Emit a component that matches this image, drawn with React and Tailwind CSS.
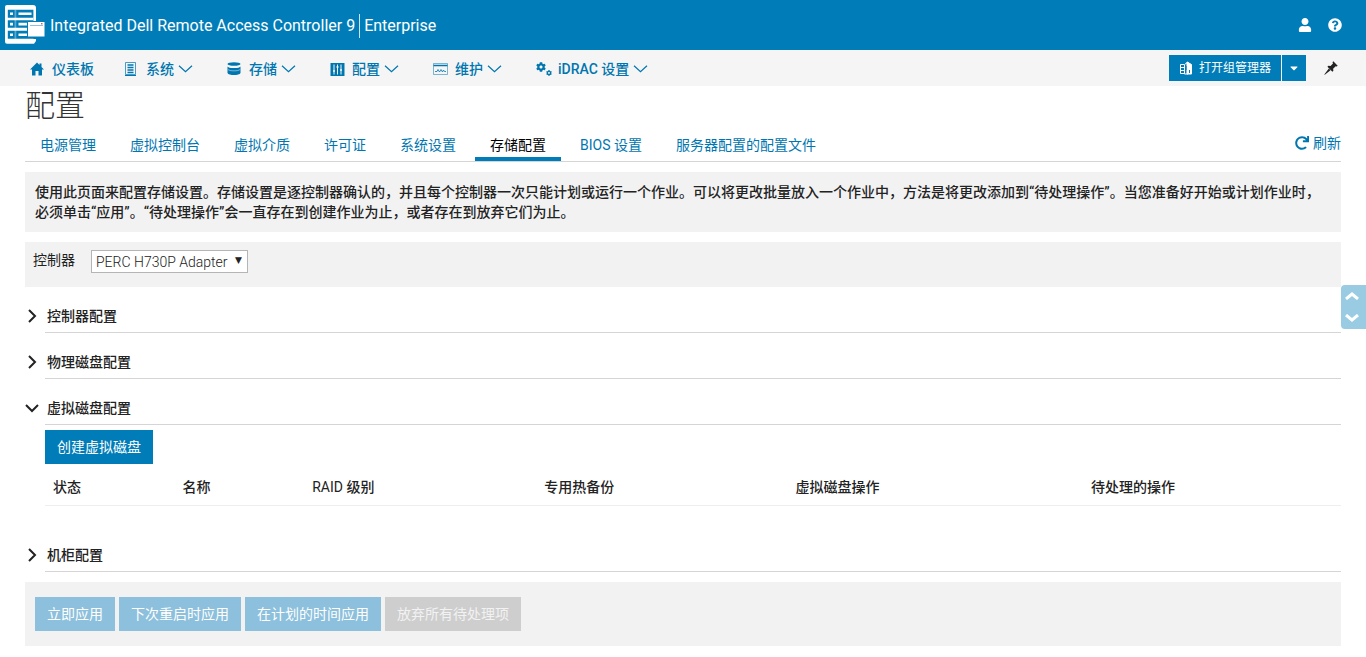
import { useState } from 'react';
import { FaUser, FaQuestionCircle, FaCog, FaRedo, FaCaretDown } from 'react-icons/fa';

const LogoIcon = () => (
  <svg viewBox="0 0 42 40" className="w-[42px] h-10 shrink-0" aria-hidden="true">
    <path d="M3 0h26a3 3 0 0 1 3 3v33l-2 2.800H3a2 2 0 0 1-2-2V2a2 2 0 0 1 2-2z" fill="#fff" />
    <path d="M3.800 4.800h26v8h-26zM3.800 15.300h26v7.500h-26zM3.800 25.800h30v8h-30z" fill="#007db8" />
    <path d="M6 7.500h3v2.600H6zM14.500 7.500h13v2.600h-13zM6 17.800h3v2.600H6zM14.500 17.800h9v2.600h-9zM6 28.500h3v2.600H6zM14.500 28.500h9v2.600h-9z" fill="#fff" />
    <path d="M10.500 4.800h1.800v29h-1.800z" fill="#fff" fillOpacity=".35" />
    <path d="M29.500 13h3v5h-3zM29.500 31h3v3h-3z" fill="#007db8" />
    <path d="M29.500 3h2.500v13h-2.500z" fill="#fff" />
    <path d="M23.500 16.500h17.500v15.500H23.500z" fill="#fff" stroke="#007db8" />
    <path d="M26 20.500h13" stroke="#8cc0dc" />
    <path d="M37 18.800h1.500" stroke="#ce1126" />
  </svg>
);

const HomeIcon = () => (
  <svg viewBox="0 0 14 14" className="w-3.5 h-3.5" fill="currentColor" aria-hidden="true">
    <path d="M7 .5L0 7.500h2V13.500h3.500V9h3v4.500H12V7.500h2L11.500 5V1.500h-2V3z" />
  </svg>
);

const SystemIcon = () => (
  <svg viewBox="0 0 14 16" className="w-3.5 h-4" fill="none" stroke="currentColor" aria-hidden="true">
    <path d="M1.500 1.500h10v12h-10z" strokeOpacity=".7" />
    <path d="M3.500 4h6M3.500 6.500h6M3.500 9h6M3.500 11.500h6" strokeWidth="1.400" />
    <path d="M1 14.500h11" />
  </svg>
);

const StorageIcon = () => (
  <svg viewBox="0 0 14 16" className="w-3.5 h-4" fill="currentColor" aria-hidden="true">
    <ellipse cx="7" cy="3" rx="6.500" ry="1.800" />
    <path d="M.5 5.500C2 7.500 12 7.500 13.500 5.500v6.500c-1 2.800-12 2.800-13 0z" />
    <path d="M.5 4.800C2 6.800 12 6.800 13.500 4.800" fill="none" stroke="#f5f5f5" />
    <path d="M1 8.500c1.500 1.800 10.500 1.800 12 0" fill="none" stroke="#f5f5f5" strokeOpacity=".5" />
  </svg>
);

const ConfigIcon = () => (
  <svg viewBox="0 0 15 15" className="w-[15px] h-[15px]" aria-hidden="true">
    <path d="M.5 1h14v13H.5z" fill="currentColor" />
    <path d="M4 2.500v10M7.500 2.500v10M11 2.500v10" stroke="#f5f5f5" />
    <path d="M3 9h2M6.500 5h2M10 8h2" stroke="#f5f5f5" strokeWidth="1.300" />
  </svg>
);

const MaintenanceIcon = () => (
  <svg viewBox="0 0 16 14" className="w-4 h-3.5" fill="none" stroke="currentColor" aria-hidden="true">
    <path d="M.5 1.500h14v11H.5z" strokeOpacity=".5" />
    <path d="M.5 3.500h14" strokeWidth="1.500" />
    <path d="M2 9.500h2l1-2 1.500 2.500L8 7.500l1.500 2.500 1-2 1 1.500H13" strokeWidth=".8" />
  </svg>
);

const GearsIcon = () => (
  <span className="flex items-end">
    <FaCog className="w-2.5 h-2.5 mb-1" />
    <FaCog className="w-1.5 h-1.5" />
  </span>
);

const GroupIcon = () => (
  <svg viewBox="0 0 14 14" className="w-3.5 h-3.5" fill="none" stroke="#fff" aria-hidden="true">
    <path d="M5 3.500H1.500v9H5M1.500 6.500H5M1.500 9.500H5" />
    <path d="M5.500 3.500L9 1v12H5.500z" />
    <path d="M8 1l4.500 2.500V13H8z" fill="#fff" />
    <path d="M7 5v2M6 8h2M10.500 9v3" stroke="#007db8" />
  </svg>
);

const PinIcon = () => (
  <svg viewBox="0 0 14 14" className="w-3.5 h-3.5" fill="currentColor" aria-hidden="true">
    <path d="M9.300.3l4.400 4.400-1 .8-1-.3-2.600 2.500.3 2.100-1 .9-5-5 1-.9 2.100.3L9 2.400l-.5-1.200z" />
    <path d="M4.800 7.500l1.700 1.700L.8 13.800l-.5-.4z" />
  </svg>
);

const NavChevron = () => (
  <svg viewBox="0 0 15 8" className="w-[15px] h-2 mx-1" fill="none" stroke="currentColor" strokeWidth="1.200" aria-hidden="true">
    <path d="M1 .8l6.500 6 6.500-6" />
  </svg>
);

const Arrow = ({ open }) => (
  <svg viewBox="0 0 14 14" className="w-3.5 h-3.5 shrink-0" fill="none" stroke="currentColor" strokeWidth="2" aria-hidden="true">
    {open ? <path d="M1 4l6 6 6-6" /> : <path d="M4 1l6 6-6 6" />}
  </svg>
);

const navItems = [
  { label: '仪表板', icon: <HomeIcon /> },
  { label: '系统', icon: <SystemIcon />, menu: true },
  { label: '存储', icon: <StorageIcon />, menu: true },
  { label: '配置', icon: <ConfigIcon />, menu: true },
  { label: '维护', icon: <MaintenanceIcon />, menu: true },
  { label: 'iDRAC 设置', icon: <GearsIcon />, menu: true },
];

const tabs = ['电源管理', '虚拟控制台', '虚拟介质', '许可证', '系统设置', '存储配置', 'BIOS 设置', '服务器配置的配置文件'];

const columns = [
  { label: '状态', width: 'w-[10%]' },
  { label: '名称', width: 'w-[10%]' },
  { prefix: 'RAID ', label: '级别', width: 'w-[17.9%]' },
  { label: '专用热备份', width: 'w-[19.4%]' },
  { label: '虚拟磁盘操作', width: 'w-[22.8%]' },
  { label: '待处理的操作', width: 'w-[19.9%]' },
];

function Section({ title, open, onToggle, children }) {
  return (
    <section>
      <button onClick={onToggle} aria-expanded={open} className="flex w-full items-end text-left font-medium">
        <span className="pb-2.5"><Arrow open={open} /></span>
        <span className="ml-1.5 flex-1 border-b border-[#d5d5d5] pt-[19px] pb-1.5 pl-0.5 leading-5">{title}</span>
      </button>
      {open && children}
    </section>
  );
}

export default function App() {
  const [activeTab, setActiveTab] = useState('存储配置');
  const [open, setOpen] = useState({ virtual: true });

  const toggle = (key) => setOpen((prev) => ({ ...prev, [key]: !prev[key] }));

  return (
    <div className="min-h-screen bg-white text-sm leading-5 text-[#222] font-[Roboto,'Noto_Sans_CJK_SC',sans-serif]">
      <header className="flex h-[50px] items-center bg-[#007db8] pl-1 pr-6 text-white">
        <LogoIcon />
        <h1 className="ml-1 flex items-center pt-0.5 text-base">
          <span className="border-r border-white/80 pr-1">Integrated Dell Remote Access Controller 9</span>
          <span className="pl-1">Enterprise</span>
        </h1>
        <div className="ml-auto flex items-center gap-4">
          <button aria-label="用户"><FaUser className="w-3.5 h-3.5" /></button>
          <button aria-label="帮助"><FaQuestionCircle className="w-3.5 h-3.5" /></button>
        </div>
      </header>

      <nav className="flex h-9 items-center bg-[#f5f5f5] pl-[30px] pr-7 text-[#0076b0]">
        <div className="flex items-center gap-[30px] pt-0.5">
          {navItems.map((item) => (
            <a key={item.label} href="#" className="flex items-center font-medium">
              <span className="w-[22px]">{item.icon}</span>
              {item.label}
              {item.menu && <NavChevron />}
            </a>
          ))}
        </div>
        <div className="ml-auto flex items-center">
          <button className="flex h-[26px] items-center gap-1.5 bg-[#007db8] px-2.5 text-xs text-white">
            <GroupIcon />
            打开组管理器
          </button>
          <button aria-label="更多" className="ml-px flex h-[26px] w-6 items-center justify-center bg-[#007db8] text-white">
            <FaCaretDown className="w-3 h-3" />
          </button>
          <button aria-label="固定" className="ml-[18px] text-[#222]"><PinIcon /></button>
        </div>
      </nav>

      <main className="px-[25px]">
        <h2 className="text-3xl leading-10 font-light text-[#333]">配置</h2>

        <div className="flex items-end justify-between border-b border-[#d5d5d5]">
          <div className="flex gap-1">
            {tabs.map((tab) => (
              <button
                key={tab}
                onClick={() => setActiveTab(tab)}
                className={`border-b-4 px-[15px] pt-[9px] pb-0.5 ${
                  activeTab === tab ? 'border-[#007db8] text-black' : 'border-transparent text-[#0076b0]'
                }`}
              >
                {tab}
              </button>
            ))}
          </div>
          <button className="flex items-center gap-1 pb-2 text-[#0076b0]">
            <FaRedo className="w-3.5 h-3.5" />
            刷新
          </button>
        </div>

        <p className="mt-2.5 bg-[#f2f2f2] p-2.5 font-medium">
          使用此页面来配置存储设置。存储设置是逐控制器确认的，并且每个控制器一次只能计划或运行一个作业。可以将更改批量放入一个作业中，方法是将更改添加到“待处理操作”。当您准备好开始或计划作业时，必须单击“应用”。“待处理操作”会一直存在到创建作业为止，或者存在到放弃它们为止。
        </p>

        <div className="mt-2.5 flex h-[45px] items-start bg-[#f2f2f2] px-2 pt-2">
          <label htmlFor="controller" className="w-[58px]">控制器</label>
          <div className="relative">
            <select
              id="controller"
              className="h-[23px] w-[157px] appearance-none border border-[#b5b5b5] bg-white px-1 font-light text-[#222]"
            >
              <option>PERC H730P Adapter</option>
            </select>
            <span className="pointer-events-none absolute top-0 right-1.5 text-[9px] font-[DejaVu_Sans]">▼</span>
          </div>
        </div>

        <Section title="控制器配置" open={!!open.controller} onToggle={() => toggle('controller')} />
        <Section title="物理磁盘配置" open={!!open.physical} onToggle={() => toggle('physical')} />
        <Section title="虚拟磁盘配置" open={!!open.virtual} onToggle={() => toggle('virtual')}>
          <div className="ml-5 pt-[5px] pb-5">
            <button className="h-[34px] bg-[#007db8] px-3 text-white">创建虚拟磁盘</button>
            <table className="w-full table-fixed text-left">
              <thead>
                <tr className="border-b border-[#eee]">
                  {columns.map((col) => (
                    <th key={col.label} className={`${col.width} px-2 pt-[13px] pb-2 font-medium`}>
                      {col.prefix && <span className="font-normal">{col.prefix}</span>}
                      {col.label}
                    </th>
                  ))}
                </tr>
              </thead>
            </table>
          </div>
        </Section>
        <Section title="机柜配置" open={!!open.enclosure} onToggle={() => toggle('enclosure')} />

        <div className="mt-2.5 flex h-16 items-center gap-1 bg-[#f2f2f2] px-2.5 text-white">
          <button disabled className="h-[34px] bg-[#8cc0dc] px-3">立即应用</button>
          <button disabled className="h-[34px] bg-[#8cc0dc] px-3">下次重启时应用</button>
          <button disabled className="h-[34px] bg-[#8cc0dc] px-3">在计划的时间应用</button>
          <button disabled className="h-[34px] bg-[#cecece] px-3 text-[#f2f2f2]">放弃所有待处理项</button>
        </div>
      </main>

      <div className="fixed top-[285px] right-0 flex h-11 w-[25px] flex-col items-center justify-around rounded-l bg-[#99cbe2] pr-1 text-white">
        <button aria-label="向上">
          <svg viewBox="0 0 14 8" className="w-3.5 h-2" fill="none" stroke="currentColor" strokeWidth="3">
            <path d="M1 7l6-5 6 5" />
          </svg>
        </button>
        <button aria-label="向下">
          <svg viewBox="0 0 14 8" className="w-3.5 h-2" fill="none" stroke="currentColor" strokeWidth="3">
            <path d="M1 1l6 5 6-5" />
          </svg>
        </button>
      </div>
    </div>
  );
}
